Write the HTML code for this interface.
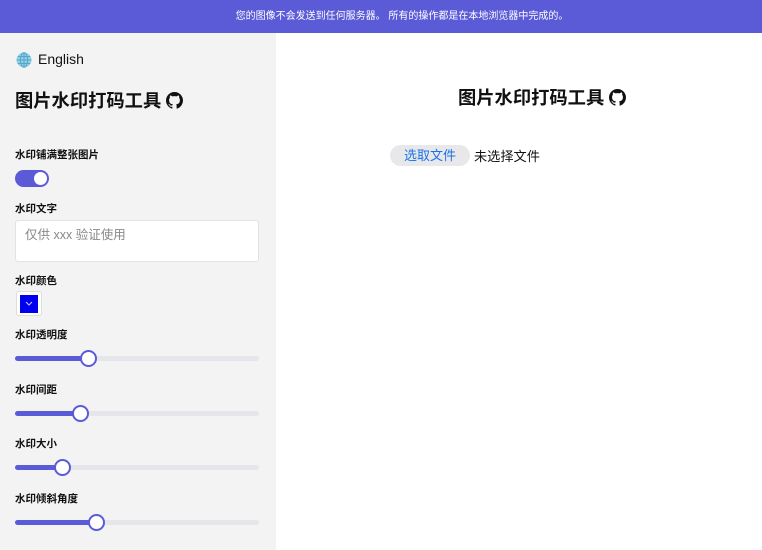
<!DOCTYPE html>
<html><head><meta charset="utf-8"><style>
*{margin:0;padding:0;box-sizing:border-box}
body{width:762px;height:550px;overflow:hidden;position:relative;background:#fff;font-family:"Liberation Sans","Noto Sans CJK SC",sans-serif;color:#111}
.a{position:absolute;white-space:nowrap}
.banner{left:0;top:0;width:762px;height:33px;background:#5b5bd8;color:#fff;font-size:10px;text-align:center;line-height:33px;padding-left:42px}
.side{left:0;top:33px;width:276px;height:517px;background:#f3f3f4}
.lbl{font-size:10.5px;font-weight:bold;left:15px}
.track{left:15px;width:244px;height:5px;border-radius:3px;background:#e4e6ea}
.fill{position:absolute;left:0;top:0;height:5px;border-radius:3px;background:#5b5bd8}
.th{position:absolute;top:-6px;width:17px;height:17px;border-radius:50%;background:#fff;border:2px solid #5b5bd8}
.gh{display:inline-block;vertical-align:-2px}
.ttl{font-size:18.3px;font-weight:bold}
</style></head><body>
<div class="a banner">您的图像不会发送到任何服务器。 所有的操作都是在本地浏览器中完成的。</div>
<div class="a side"></div>
<svg class="a" style="left:16px;top:52px" width="16" height="16" viewBox="0 0 16 16"><circle cx="8" cy="8" r="7.5" fill="#8ecfe6"/><g stroke="#4a9fc0" stroke-width="0.8" fill="none"><ellipse cx="8" cy="8" rx="3.5" ry="7.3"/><line x1="8" y1="0.5" x2="8" y2="15.5"/><line x1="0.5" y1="8" x2="15.5" y2="8"/><line x1="1.8" y1="4.5" x2="14.2" y2="4.5"/><line x1="1.8" y1="11.5" x2="14.2" y2="11.5"/></g></svg>
<div class="a" style="left:38px;top:51px;font-size:14px">English</div>
<div class="a ttl" style="left:15px;top:87px">图片水印打码工具 <svg class="gh" width="17" height="17" viewBox="0 0 16 16"><path fill="#111" d="M8 0C3.58 0 0 3.58 0 8c0 3.54 2.29 6.53 5.47 7.59.4.07.55-.17.55-.38v-1.33c-2.23.48-2.7-1.07-2.7-1.07-.36-.92-.89-1.17-.89-1.17-.73-.5.05-.49.05-.49.8.06 1.230.83 1.23.83.72 1.22 1.87.87 2.33.66.07-.52.28-.87.5-1.07-1.78-.2-3.64-.89-3.64-3.95 0-.87.31-1.59.82-2.15-.08-.2-.36-1.02.08-2.12 0 0 .67-.21 2.2.82.64-.18 1.32-.27 2-.27.68 0 1.36.09 2 .27 1.53-1.04 2.2-.82 2.2-.82.44 1.1.16 1.92.08 2.12.51.56.82 1.27.82 2.15 0 3.07-1.87 3.75-3.65 3.95.29.25.54.73.54 1.48v2.2c0 .21.15.46.55.38A8.01 8.01 0 0016 8c0-4.42-3.58-8-8-8z"/></svg></div>
<div class="a lbl" style="top:147px">水印铺满整张图片</div>
<div class="a" style="left:15px;top:170px;width:34px;height:17px;border-radius:9px;background:#5b5bd8"><div style="position:absolute;right:2px;top:2px;width:13px;height:13px;border-radius:50%;background:#fff"></div></div>
<div class="a lbl" style="top:201px">水印文字</div>
<div class="a" style="left:15px;top:220px;width:244px;height:42px;background:#fff;border:1px solid #e3e3e6;border-radius:3px"></div>
<div class="a" style="left:25px;top:224px;font-size:12.5px;color:#888">仅供 xxx 验证使用</div>
<div class="a lbl" style="top:273px">水印颜色</div>
<div class="a" style="left:16px;top:291px;width:26px;height:25px;background:#fff;border:1px solid #ddd;border-radius:3px"><div style="position:absolute;left:3px;top:3px;width:18px;height:18px;background:#0000ee"></div><svg style="position:absolute;left:8px;top:9px" width="8" height="5" viewBox="0 0 8 5"><path d="M1 1l3 3 3-3" stroke="#ccf" stroke-width="1" fill="none"/></svg></div>
<div class="a lbl" style="top:327px">水印透明度</div>
<div class="a track" style="top:356px"><div class="fill" style="width:73px"></div><div class="th" style="left:65px"></div></div>
<div class="a lbl" style="top:382px">水印间距</div>
<div class="a track" style="top:411px"><div class="fill" style="width:65px"></div><div class="th" style="left:57px"></div></div>
<div class="a lbl" style="top:436px">水印大小</div>
<div class="a track" style="top:465px"><div class="fill" style="width:47px"></div><div class="th" style="left:39px"></div></div>
<div class="a lbl" style="top:491px">水印倾斜角度</div>
<div class="a track" style="top:520px"><div class="fill" style="width:81px"></div><div class="th" style="left:73px"></div></div>
<div class="a ttl" style="left:458px;top:84px">图片水印打码工具 <svg class="gh" width="17" height="17" viewBox="0 0 16 16"><path fill="#111" d="M8 0C3.58 0 0 3.58 0 8c0 3.54 2.29 6.53 5.47 7.59.4.07.55-.17.55-.38v-1.33c-2.23.48-2.7-1.07-2.7-1.07-.36-.92-.89-1.17-.89-1.17-.73-.5.05-.49.05-.49.8.06 1.23.83 1.23.83.72 1.22 1.87.87 2.33.66.07-.52.28-.87.5-1.07-1.78-.2-3.64-.89-3.64-3.95 0-.87.31-1.59.82-2.15-.08-.2-.36-1.02.08-2.12 0 0 .67-.21 2.2.82.64-.18 1.32-.27 2-.27.68 0 1.36.09 2 .27 1.53-1.04 2.2-.82 2.2-.82.44 1.1.16 1.92.08 2.12.51.56.82 1.27.82 2.15 0 3.07-1.87 3.75-3.65 3.95.29.25.54.73.54 1.48v2.2c0 .21.15.46.55.38A8.01 8.01 0 0016 8c0-4.42-3.58-8-8-8z"/></svg></div>
<div class="a" style="left:390px;top:145px;width:80px;height:21px;border-radius:11px;background:#e8e8eb;color:#1a73e8;font-size:13px;text-align:center;line-height:21px">选取文件</div>
<div class="a" style="left:474px;top:146px;font-size:13.2px">未选择文件</div>
</body></html>
